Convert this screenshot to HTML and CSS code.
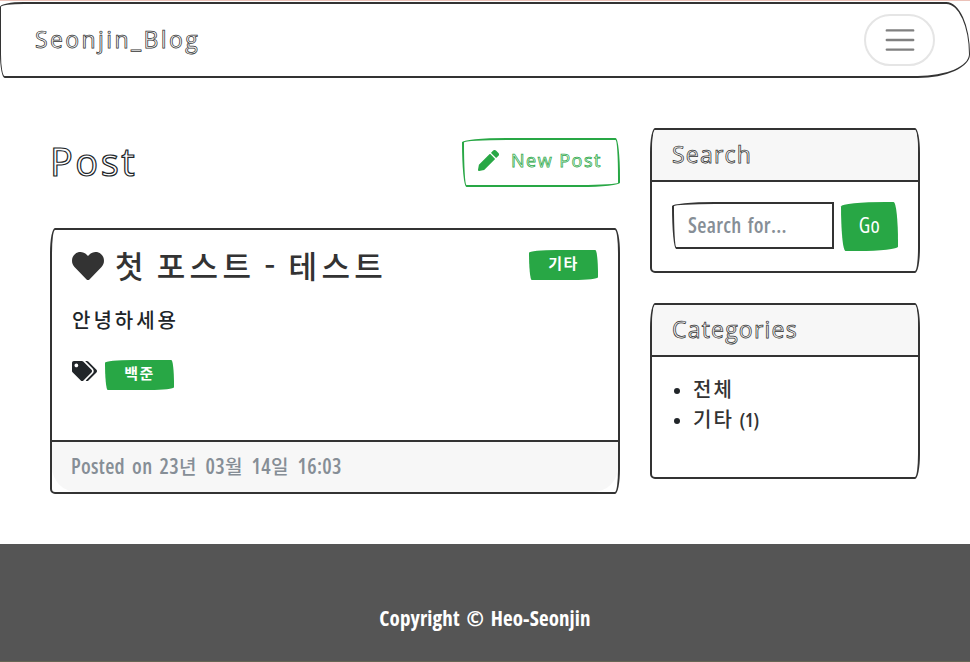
FILE: index.html
```html
<!DOCTYPE html>
<html lang="ko">
<head>
<meta charset="utf-8">
<title>Seonjin_Blog</title>
<link rel="stylesheet" href="styles.css">
</head>
<body>
<nav class="navbar">
  <a class="brand sketch">Seonjin_Blog</a>
  <button class="toggler" aria-label="Menu"><svg width="36" height="36" viewBox="0 0 30 30"><path d="M4 7h22M4 15h22M4 23h22" stroke="#808080" stroke-width="2" stroke-linecap="round" stroke-miterlimit="10"/></svg></button>
</nav>
<div class="container">
  <main class="posts">
    <div class="heading">
      <h1 class="sketch">Post</h1>
      <a class="new-post"><svg width="21" height="21" viewBox="0 0 512 512"><path fill="currentColor" d="M498 142l-46 46c-5 5-12 5-17 0L324 77c-5-5-5-12 0-17l46-46c19-19 49-19 68 0l60 60c19 19 19 49 0 68zm-214-42L22 362 0 484c-3 16 12 30 28 28l122-22 262-262c5-5 5-12 0-17L301 100c-4-5-12-5-17 0z"/></svg><span class="sketch">New Post</span></a>
    </div>
    <article class="card post">
      <div class="post-body">
        <div class="title-row">
          <h2><svg width="32" height="32" viewBox="0 0 512 512"><path fill="currentColor" d="M462 62c-55-47-136-38-186 14l-20 20-20-20C186 24 105 15 50 62c-63 54-66 150-10 208l193 200c13 13 33 13 46 0l193-200c56-58 53-154-10-208z"/></svg><span class="title">첫 포스트 - 테스트</span></h2>
          <span class="badge">기타</span>
        </div>
        <p class="summary">안녕하세용</p>
        <div class="tags"><svg width="25" height="20" viewBox="0 0 640 512"><path fill="#212529" d="M498 225L287 14C278 5 266 0 253 0H48C22 0 0 22 0 48v205c0 13 5 25 14 34l211 211c19 19 49 19 68 0l205-205c19-19 19-49 0-68zM112 160c-27 0-48-21-48-48s21-48 48-48 48 21 48 48-21 48-48 48zm514 133L421 498c-19 19-49 19-68 0l-.4-.4L528 323c18-18 28-41 28-66s-10-48-28-66L337 0h44c13 0 25 5 34 14l211 211c19 19 19 49 0 68z"/></svg><span class="badge">백준</span></div>
      </div>
      <div class="post-footer"><span class="posted">Posted on 23<b>년</b> 03<b>월</b> 14<b>일</b> 16:03</span></div>
    </article>
  </main>
  <aside class="side">
    <section class="card search">
      <h5 class="card-header sketch">Search</h5>
      <div class="search-body"><div class="field"><span>Search for...</span></div><button class="go"><span>Go</span></button></div>
    </section>
    <section class="card categories">
      <h5 class="card-header sketch">Categories</h5>
      <ul><li>전체</li><li>기타 <span class="count">(1)</span></li></ul>
    </section>
  </aside>
</div>
<footer class="footer"><span>Copyright © Heo-Seonjin</span></footer>
</body>
</html>
```
FILE: styles.css
```css
* { box-sizing: border-box; }
body {
  margin: 0;
  height: 662px;
  overflow: hidden;
  display: flex;
  flex-direction: column;
  border-top: 1px solid #ebc1b8;
  background: #fff;
  color: #212529;
  font: 20px/30px "Open Sans", "Noto Sans CJK KR", sans-serif;
}
svg { display: block; flex: none; }
h1, h2, h5, p, ul { margin: 0; font-weight: 400; }
.sketch {
  font-family: "Open Sans", "Noto Sans", sans-serif;
  -webkit-text-fill-color: #fff;
  -webkit-text-stroke: .75px currentColor;
  white-space: nowrap;
}
.navbar {
  height: 76px;
  margin-top: 1px;
  padding: 0 34px;
  flex: none;
  display: flex;
  align-items: center;
  justify-content: space-between;
  border: 2px solid #333;
  border-left-width: 1px;
  border-right-width: 1px;
  border-radius: 25px 25px 55px 5px / 5px 55px 25px 25px;
  color: #333;
}
.brand { font-size: 23px; letter-spacing: 2.4px; padding-bottom: 3px; }
.toggler {
  width: 71px;
  height: 52px;
  padding: 0;
  display: flex;
  align-items: center;
  justify-content: center;
  background: none;
  border: 2px solid #e5e5e5;
  border-radius: 26px;
}
.container {
  flex: none;
  height: 466px;
  padding: 50px 50px 0;
  display: grid;
  grid-template-columns: 570px 270px;
  gap: 30px;
}
.heading {
  height: 100px;
  padding-top: 10px;
  display: flex;
  align-items: flex-start;
  justify-content: space-between;
}
h1 { font-size: 38px; line-height: 46px; letter-spacing: 2.5px; }
h1.sketch { -webkit-text-stroke-width: 1.2px; }
.new-post {
  width: 158px;
  height: 49px;
  padding: 0 0 5px 14px;
  display: flex;
  align-items: center;
  gap: 12px;
  border: 2px solid #28a745;
  border-radius: 255px 25px 225px 25px / 25px 225px 25px 255px;
  color: #28a745;
  font-size: 18px;
  letter-spacing: 1.5px;
}
.card {
  border: 2px solid #333;
  border-radius: 5px 5px 5px 5px / 25px 25px 25px 5px;
  overflow: hidden;
}
.post { height: 266px; display: flex; flex-direction: column; }
.post-body { flex: 1; padding: 20px; }
.title-row { display: flex; justify-content: space-between; height: 55px; }
h2 { display: flex; gap: 11px; color: #333; }
.title {
  font: 500 31px/29px "Noto Sans CJK KR", sans-serif;
  letter-spacing: 4.3px;
  word-spacing: -4px;
  white-space: nowrap;
}
.badge {
  width: 69px;
  height: 30px;
  background: #28a745;
  border-radius: 255px 25px 225px 25px / 25px 225px 25px 255px;
  color: #fff;
  font: 700 15px/25px "Noto Sans CJK KR", sans-serif;
  letter-spacing: 1.5px;
  text-align: center;
}
.summary {
  font: 500 20px/30px "Noto Sans CJK KR", sans-serif;
  letter-spacing: 3px;
}
.tags { display: flex; gap: 8px; margin-top: 25px; }
.tags svg { margin-top: 1px; }
.post-footer {
  height: 52px;
  padding: 9px 19px;
  border-top: 2px solid #333;
  background: #f7f7f7;
  border-radius: 0 0 25px 25px;
  color: #868e96;
}
.posted, .field span, .go span, .footer span, .count {
  display: inline-block;
  font-size: 21px;
  font-weight: 600;
  white-space: nowrap;
  font-stretch: 75%;
}
.posted { letter-spacing: .3px; word-spacing: 3px; }
.post-footer b { font: 500 19px "Noto Sans CJK KR"; letter-spacing: 2px; }
.side { display: flex; flex-direction: column; gap: 30px; }
.search { height: 145px; }
.categories { height: 176px; }
.card-header {
  height: 52px;
  padding: 0 20px;
  background: #f7f7f7;
  border-bottom: 2px solid #333;
  color: #333;
  font-size: 23px;
  line-height: 48px;
  letter-spacing: 1.2px;
}
.card-header.sketch { -webkit-text-fill-color: #f7f7f7; }
.search-body { display: flex; gap: 7px; padding: 20px 20px 0; }
.field {
  width: 162px;
  height: 47px;
  padding: 6px 14px;
  border: 2px solid #333;
  border-radius: 255px 0 0 25px / 25px 0 0 255px;
  color: #868e96;
}
.field span { letter-spacing: .3px; word-spacing: 2px; }
.go {
  width: 57px;
  height: 49px;
  padding: 0 0 3px;
  border: 0;
  background: #28a745;
  border-radius: 255px 25px 225px 25px / 25px 225px 25px 255px;
  color: #fff;
  font-family: "Open Sans", sans-serif;
}
.go span { font-weight: 500; letter-spacing: .5px; }
ul { padding: 17px 0 0 41px; }
li {
  font: 500 20px/30px "Noto Sans CJK KR", sans-serif;
  letter-spacing: 2px;
  word-spacing: -2px;
  color: #333;
}
li::marker { color: #212529; font-size: 16px; }
.count { font-family: "Open Sans", sans-serif; font-size: 19px; letter-spacing: 0; line-height: 24px; }
.footer {
  flex: 1;
  padding-top: 59px;
  background: #555;
  color: #fff;
  text-align: center;
  border-bottom: 1px solid #665;
}
.footer span { font-weight: 700; letter-spacing: .1px; word-spacing: 3px; }
```
